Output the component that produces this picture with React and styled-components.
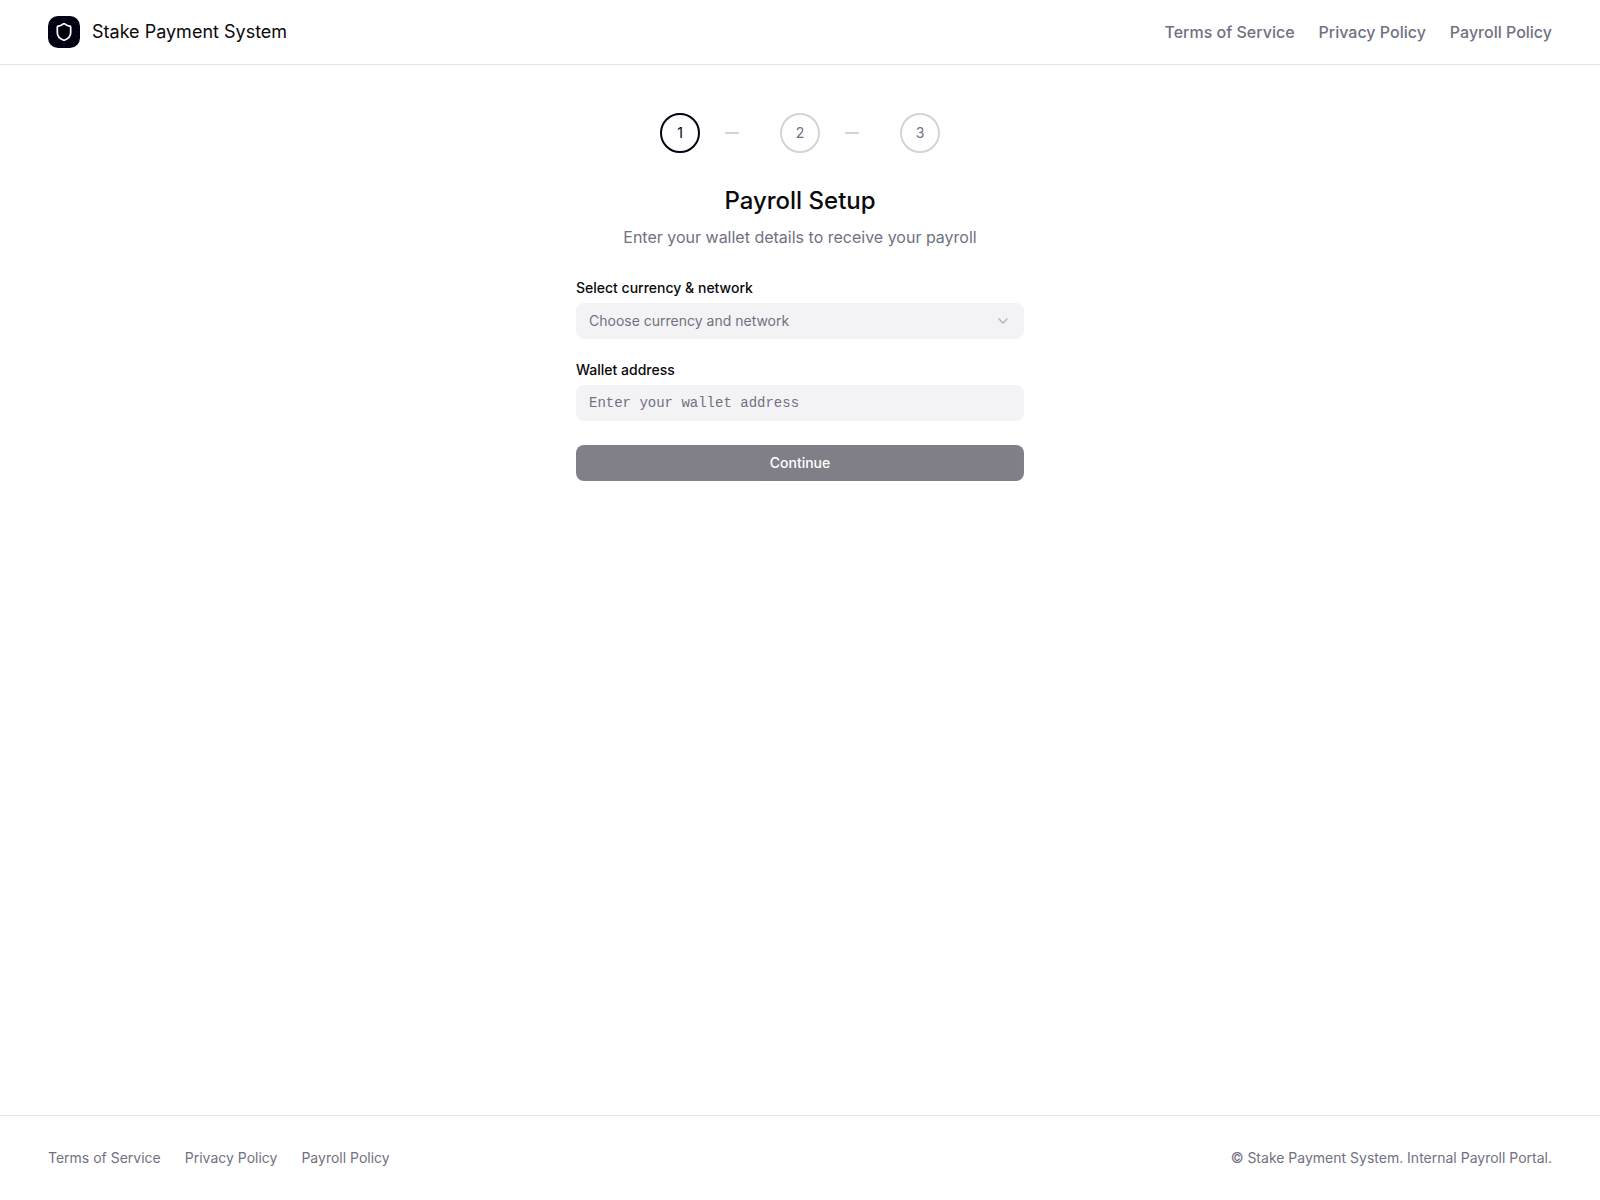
import React from "react";
import styled, { createGlobalStyle } from "styled-components";
import { Shield, ChevronDown } from "lucide-react";

const GlobalStyle = createGlobalStyle`
  *, *::before, *::after { box-sizing: border-box; }
  body {
    margin: 0;
    background: #ffffff;
    color: #0a0a0a;
    font-family: Inter, "Liberation Sans", sans-serif;
    font-size: 16px;
    line-height: 24px;
  }
`;

const Page = styled.div`
  display: flex;
  flex-direction: column;
  min-height: 100vh;
`;

const Header = styled.header`
  display: flex;
  align-items: center;
  justify-content: space-between;
  padding: 16px 48px;
  border-bottom: 1px solid rgba(0, 0, 0, 0.1);
`;

const Brand = styled.div`
  display: flex;
  align-items: center;
  gap: 12px;
  font-size: 18px;
  line-height: 28px;
`;

const Logo = styled.span`
  display: flex;
  align-items: center;
  justify-content: center;
  width: 32px;
  height: 32px;
  border-radius: 10px;
  background: #030213;
  color: #ffffff;
`;

const Links = styled.nav`
  display: flex;
  gap: 24px;
`;

const HeaderLink = styled.button`
  padding: 0;
  border: 0;
  background: none;
  color: #717182;
  font: 500 16px/24px Inter, "Liberation Sans", sans-serif;
`;

const FooterLink = styled.a`
  color: #717182;
`;

const Main = styled.main`
  flex: 1;
  padding: 48px 0;
`;

const Content = styled.div`
  width: 448px;
  margin: 0 auto;
`;

const Steps = styled.div`
  display: flex;
  align-items: center;
  justify-content: center;
  margin-bottom: 32px;
`;

const StepCircle = styled.div`
  display: flex;
  align-items: center;
  justify-content: center;
  width: 40px;
  height: 40px;
  border: 2px solid ${({ $active }) => ($active ? "#030213" : "#d4d4d8")};
  border-radius: 50%;
  color: ${({ $active }) => ($active ? "#030213" : "#717182")};
  font-size: 14px;
  line-height: 20px;
`;

const Connector = styled.div`
  width: 14px;
  height: 2px;
  margin: 0 41px 0 25px;
  background: #d4d4d8;
`;

const Intro = styled.div`
  display: flex;
  flex-direction: column;
  gap: 8px;
  margin-bottom: 32px;
  text-align: center;
`;

const Title = styled.h1`
  margin: 0;
  font-size: 24px;
  font-weight: 500;
  line-height: 32px;
`;

const Subtitle = styled.p`
  margin: 0;
  color: #717182;
`;

const Form = styled.form`
  display: flex;
  flex-direction: column;
  gap: 24px;
`;

const Field = styled.div`
  display: flex;
  flex-direction: column;
  gap: 8px;
`;

const Label = styled.label`
  font-size: 14px;
  font-weight: 500;
  line-height: 14px;
`;

const Select = styled.button`
  display: flex;
  align-items: center;
  justify-content: space-between;
  height: 36px;
  padding: 0 13px;
  border: 0;
  border-radius: 8px;
  background: #f3f3f5;
  color: #717182;
  font: 400 14px/20px Inter, "Liberation Sans", sans-serif;

  svg { opacity: 0.5; }
`;

const Input = styled.input`
  width: 100%;
  height: 36px;
  padding: 4px 13px;
  border: 0;
  border-radius: 8px;
  background: #f3f3f5;
  font: 400 14px/20px "Liberation Mono", monospace;

  &::placeholder { color: #717182; opacity: 1; }
`;

const Submit = styled.button`
  height: 36px;
  border: 0;
  border-radius: 8px;
  background: #030213;
  color: #ffffff;
  font: 500 14px/20px Inter, "Liberation Sans", sans-serif;
  opacity: 0.5;
`;

const Footer = styled.footer`
  display: flex;
  align-items: center;
  justify-content: space-between;
  padding: 32px 48px;
  border-top: 1px solid rgba(0, 0, 0, 0.1);
  color: #717182;
  font-size: 14px;
  line-height: 20px;
`;

const policies = ["Terms of Service", "Privacy Policy", "Payroll Policy"];

export default function App() {
  return (
    <Page>
      <GlobalStyle />
      <Header>
        <Brand>
          <Logo><Shield size={20} /></Logo>
          <span>Stake Payment System</span>
        </Brand>
        <Links>
          {policies.map((name) => <HeaderLink key={name}>{name}</HeaderLink>)}
        </Links>
      </Header>
      <Main>
        <Content>
          <Steps>
            <StepCircle $active>1</StepCircle>
            <Connector />
            <StepCircle>2</StepCircle>
            <Connector />
            <StepCircle>3</StepCircle>
          </Steps>
          <Intro>
            <Title>Payroll Setup</Title>
            <Subtitle>Enter your wallet details to receive your payroll</Subtitle>
          </Intro>
          <Form>
            <Field>
              <Label>Select currency &amp; network</Label>
              <Select type="button">
                <span>Choose currency and network</span>
                <ChevronDown size={16} />
              </Select>
            </Field>
            <Field>
              <Label htmlFor="wallet">Wallet address</Label>
              <Input id="wallet" placeholder="Enter your wallet address" />
            </Field>
            <Submit type="submit" disabled>Continue</Submit>
          </Form>
        </Content>
      </Main>
      <Footer>
        <Links>
          {policies.map((name) => <FooterLink key={name}>{name}</FooterLink>)}
        </Links>
        <span>© Stake Payment System. Internal Payroll Portal.</span>
      </Footer>
    </Page>
  );
}
